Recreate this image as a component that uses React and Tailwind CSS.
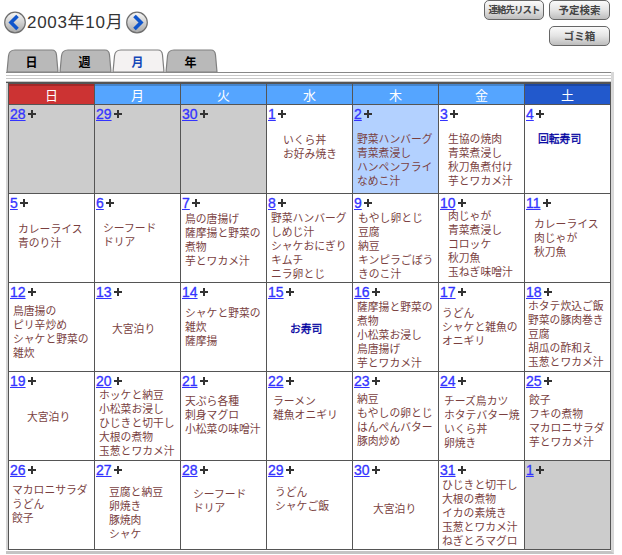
import React from 'react';

const fontStack = 'font-["Liberation_Sans","Noto_Sans_CJK_JP",sans-serif]';

const days = [
  { label: '日', bg: 'bg-[#cc3333]' },
  { label: '月', bg: 'bg-[#55a5ff]' },
  { label: '火', bg: 'bg-[#55a5ff]' },
  { label: '水', bg: 'bg-[#55a5ff]' },
  { label: '木', bg: 'bg-[#55a5ff]' },
  { label: '金', bg: 'bg-[#55a5ff]' },
  { label: '土', bg: 'bg-[#2259cc]' },
];

// pos holds the spot of the menu text inside its cell
const cells = [
  { d: 28, off: true },
  { d: 29, off: true },
  { d: 30, off: true },
  { d: 1, pos: 'pl-[16px] pt-[13px]', lines: ['いくら丼', 'お好み焼き'] },
  { d: 2, today: true, pos: 'pl-[4px] pt-[12px]', lines: ['野菜ハンバーグ', '青菜煮浸し', 'ハンペンフライ', 'なめこ汁'] },
  { d: 3, pos: 'pl-[9px] pt-[12px]', lines: ['生協の焼肉', '青菜煮浸し', '秋刀魚煮付け', '芋とワカメ汁'] },
  { d: 4, blue: true, pos: 'pl-[13px] pt-[12px]', lines: ['回転寿司'] },

  { d: 5, pos: 'pl-[9px] pt-[13px]', lines: ['カレーライス', '青のり汁'] },
  { d: 6, pos: 'pl-[8px] pt-[12px]', lines: ['シーフード', 'ドリア'] },
  { d: 7, pos: 'pl-[4px] pt-[3px]', lines: ['鳥の唐揚げ', '薩摩揚と野菜の', '煮物', '芋とワカメ汁'] },
  { d: 8, pos: 'pl-[4px] pt-[2px]', lines: ['野菜ハンバーグ', 'しめじ汁', 'シャケおにぎり', 'キムチ', 'ニラ卵とじ'] },
  { d: 9, pos: 'pl-[5px] pt-[2px]', lines: ['もやし卵とじ', '豆腐', '納豆', 'キンピラごぼう', 'きのこ汁'] },
  { d: 10, pos: 'pl-[9px] pt-0', lines: ['肉じゃが', '青菜煮浸し', 'コロッケ', '秋刀魚', '玉ねぎ味噌汁'] },
  { d: 11, pos: 'pl-[9px] pt-[8px]', lines: ['カレーライス', '肉じゃが', '秋刀魚'] },

  { d: 12, pos: 'pl-[4px] pt-[6px]', lines: ['鳥唐揚の', 'ピリ辛炒め', 'シャケと野菜の', '雑炊'] },
  { d: 13, pos: 'pl-[17px] pt-[24px]', lines: ['大宮泊り'] },
  { d: 14, pos: 'pl-[4px] pt-[8px]', lines: ['シャケと野菜の', '雑炊', '薩摩揚'] },
  { d: 15, blue: true, pos: 'pl-[23px] pt-[24px]', lines: ['お寿司'] },
  { d: 16, pos: 'pl-[4px] pt-[2px]', lines: ['薩摩揚と野菜の', '煮物', '小松菜お浸し', '鳥唐揚げ', '芋とワカメ汁'] },
  { d: 17, pos: 'pl-[3px] pt-[8px]', lines: ['うどん', 'シャケと雑魚の', 'オニギリ'] },
  { d: 18, pos: 'pl-[3px] pt-px', lines: ['ホタテ炊込ご飯', '野菜の豚肉巻き', '豆腐', '胡瓜の酢和え', '玉葱とワカメ汁'] },

  { d: 19, pos: 'pl-[18px] pt-[23px]', lines: ['大宮泊り'] },
  { d: 20, pos: 'pl-[4px] pt-px', lines: ['ホッケと納豆', '小松菜お浸し', 'ひじきと切干し', '大根の煮物', '玉葱とワカメ汁'] },
  { d: 21, pos: 'pl-[4px] pt-[7px]', lines: ['天ぷら各種', '刺身マグロ', '小松菜の味噌汁'] },
  { d: 22, pos: 'pl-[6px] pt-[7px]', lines: ['ラーメン', '雑魚オニギリ'] },
  { d: 23, pos: 'pl-[4px] pt-[5px]', lines: ['納豆', 'もやしの卵とじ', 'はんぺんバター', '豚肉炒め'] },
  { d: 24, pos: 'pl-[5px] pt-[7px]', lines: ['チーズ鳥カツ', 'ホタテバター焼', 'いくら丼', '卵焼き'] },
  { d: 25, pos: 'pl-[4px] pt-[6px]', lines: ['餃子', 'フキの煮物', 'マカロニサラダ', '芋とワカメ汁'] },

  { d: 26, pos: 'pl-[3px] pt-[7px]', lines: ['マカロニサラダ', 'うどん', '餃子'] },
  { d: 27, pos: 'pl-[14px] pt-[9px]', lines: ['豆腐と納豆', '卵焼き', '豚焼肉', 'シャケ'] },
  { d: 28, pos: 'pl-[12px] pt-[11px]', lines: ['シーフード', 'ドリア'] },
  { d: 29, pos: 'pl-[8px] pt-[9px]', lines: ['うどん', 'シャケご飯'] },
  { d: 30, pos: 'pl-[20px] pt-[26px]', lines: ['大宮泊り'] },
  { d: 31, pos: 'pl-[3px] pt-[2px]', lines: ['ひじきと切干し', '大根の煮物', 'イカの素焼き', '玉葱とワカメ汁', 'ねぎとろマグロ'] },
  { d: 1, off: true },
];

const tabs = [
  { label: '日' },
  { label: '週' },
  { label: '月', active: true },
  { label: '年' },
];

const RoundArrow = ({ dir }) => (
  <svg width="22" height="23" viewBox="0 0 22 23" className="shrink-0">
    <defs>
      <linearGradient id={`ball-${dir}`} x1="0" y1="0" x2="0" y2="1">
        <stop offset="0" stopColor="#f8f8f8" />
        <stop offset="1" stopColor="#a8a8a8" />
      </linearGradient>
    </defs>
    <circle cx="11" cy="11.5" r="10.3" fill={`url(#ball-${dir})`} stroke="#6f6f6f" strokeWidth="1.2" />
    <path
      d={dir === 'left' ? 'M13.5 5 L7 11.5 L13.5 18' : 'M8.5 5 L15 11.5 L8.5 18'}
      fill="none"
      stroke="#0f55cc"
      strokeWidth="3.6"
      strokeLinejoin="miter"
    />
  </svg>
);

const ToolButton = ({ children, small }) => (
  <button
    className={`h-[20px] rounded-[5px] border border-[#666] bg-gradient-to-b from-[#fafafa] via-[#e4e4e4] to-[#bdbdbd] font-bold text-[#444] leading-none ${
      small ? 'w-[60px] text-[9.5px] tracking-[-1px]' : 'w-[61px] text-[10.5px]'
    }`}
  >
    {children}
  </button>
);

const Tab = ({ label, active }) => (
  <div className="relative flex h-[23px] w-[53px] items-center justify-center pr-[2px]">
    <svg width="53" height="23" viewBox="0 0 53 23" className="absolute inset-0">
      <path
        d="M1 23 L2.5 7 Q3 1 9 1 H46 Q50 1 50.5 6 L52 23 Z"
        fill={active ? '#f4f2f2' : '#b9b9b9'}
        stroke="#808080"
        strokeWidth="1.2"
      />
    </svg>
    <span className={`relative mt-[5px] text-[12px] font-bold leading-none ${active ? 'text-[#1447b8]' : 'text-black'}`}>
      {label}
    </span>
  </div>
);

const DayCell = ({ d, off, today, blue, pos, lines }) => (
  <div className={`h-[88px] overflow-hidden ${off ? 'bg-[#cccccc]' : today ? 'bg-[#b3d1ff]' : 'bg-white'}`}>
    <div className="flex h-[15px] items-start pl-px">
      <a href="#" className="text-[14px] leading-[18px] text-[#3333ff] underline [-webkit-text-stroke:0.3px_#3333ff]">
        {d}
      </a>
      <svg width="8" height="8" viewBox="0 0 8 8" className="ml-[2px] mt-[5px]">
        <path d="M4 0 V8 M0 4 H8" stroke="#333" strokeWidth="2" />
      </svg>
    </div>
    {lines && (
      <div
        className={`${pos} text-[10.8px] leading-[14px] whitespace-nowrap ${
          blue ? 'text-[#0000a0] [-webkit-text-stroke:0.3px_#0000a0]' : 'text-[#7a3f3f]'
        }`}
      >
        {lines.map((line, i) => (
          <div key={i}>{line}</div>
        ))}
      </div>
    )}
  </div>
);

export default function App() {
  return (
    <div className={`h-[555px] w-[622px] overflow-hidden bg-white ${fontStack}`}>
      {/* top row */}
      <div className="flex h-[49px] items-start justify-between pl-[4px] pr-[12px]">
        <div className="mt-[11px] flex items-center">
          <RoundArrow dir="left" />
          <span className="ml-px w-[99px] text-[17px] leading-[23px] tracking-[0.7px] text-[#333]">2003年10月</span>
          <RoundArrow dir="right" />
        </div>
        <div className="flex flex-col items-end gap-[6px]">
          <div className="flex gap-[5px]">
            <ToolButton small>連絡先リスト</ToolButton>
            <ToolButton>予定検索</ToolButton>
          </div>
          <ToolButton>ゴミ箱</ToolButton>
        </div>
      </div>

      {/* tabs */}
      <div className="flex h-[23px] pl-[6px]">
        {tabs.map((t) => (
          <Tab key={t.label} label={t.label} active={t.active} />
        ))}
      </div>

      {/* calendar frame */}
      <div className="ml-[6px] w-[608px] border-b-[3px] border-r-[3px] border-b-[#c4c4c4] border-r-[#d8d8d8]">
        <div className="h-[11px] border-y border-t-[#888] border-b-[#555] bg-[repeating-linear-gradient(to_bottom,#ffffff_0,#ffffff_2px,#c8c8c8_2px,#c8c8c8_3px)]" />
        <div className="border-l-2 border-l-[#d4d4d4]">
          <div className="mb-px grid w-[603px] grid-cols-[repeat(7,85px)] gap-px bg-[#555] p-px">
            {days.map((day) => (
              <div
                key={day.label}
                className={`flex h-[20px] items-center justify-center border-t-2 border-t-black/20 text-[13px] leading-none text-white ${day.bg}`}
              >
                {day.label}
              </div>
            ))}
            {cells.map((c, i) => (
              <DayCell key={i} {...c} />
            ))}
          </div>
        </div>
      </div>
    </div>
  );
}
